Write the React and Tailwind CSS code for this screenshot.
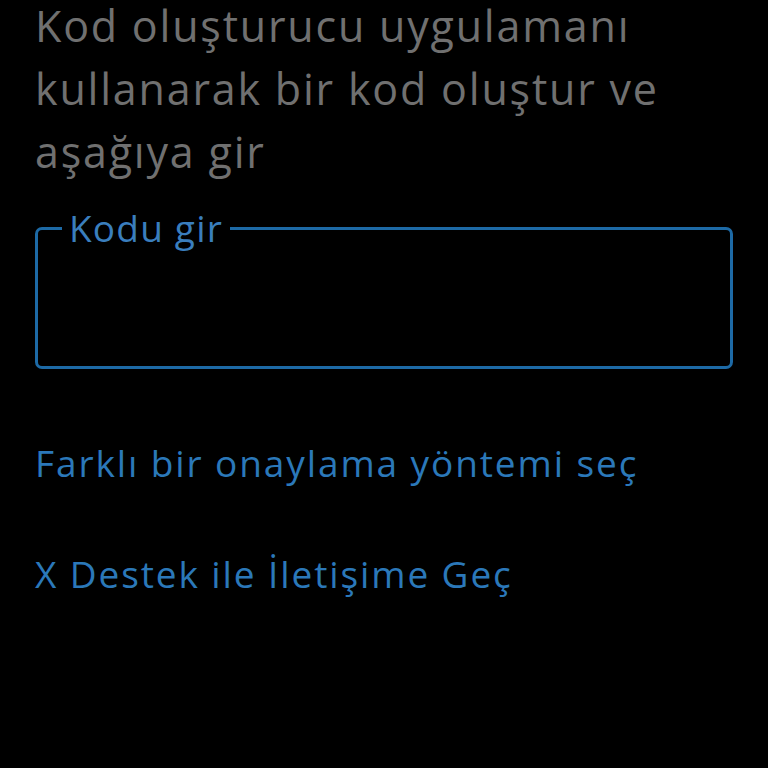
export default function App() {
  return (
    <div className="min-h-[768px] w-[768px] bg-black font-['Open_Sans',sans-serif]">
      <div className="px-[35px] pt-[1px]">
        <p className="-mt-[7px] text-[43px] leading-[63px] tracking-[1.8px] text-[#707070]">
          Kod oluşturucu uygulamanı kullanarak bir kod oluştur ve aşağıya gir
        </p>

        <fieldset className="mt-[26px] h-[160px] rounded-[7px] border-[3px] border-[#1d6aa6] px-[24px]">
          <legend className="px-[7px] text-[37px] leading-[38px] tracking-[1.2px] text-[#3a7ebd]">Kodu gir</legend>
        </fieldset>

        <div className="mt-[63px] flex flex-col gap-[49px] text-[37px] leading-[62px] tracking-[1.9px] text-[#2b78b9]">
          <a>Farklı bir onaylama yöntemi seç</a>
          <a>X Destek ile İletişime Geç</a>
        </div>
      </div>
    </div>
  )
}
